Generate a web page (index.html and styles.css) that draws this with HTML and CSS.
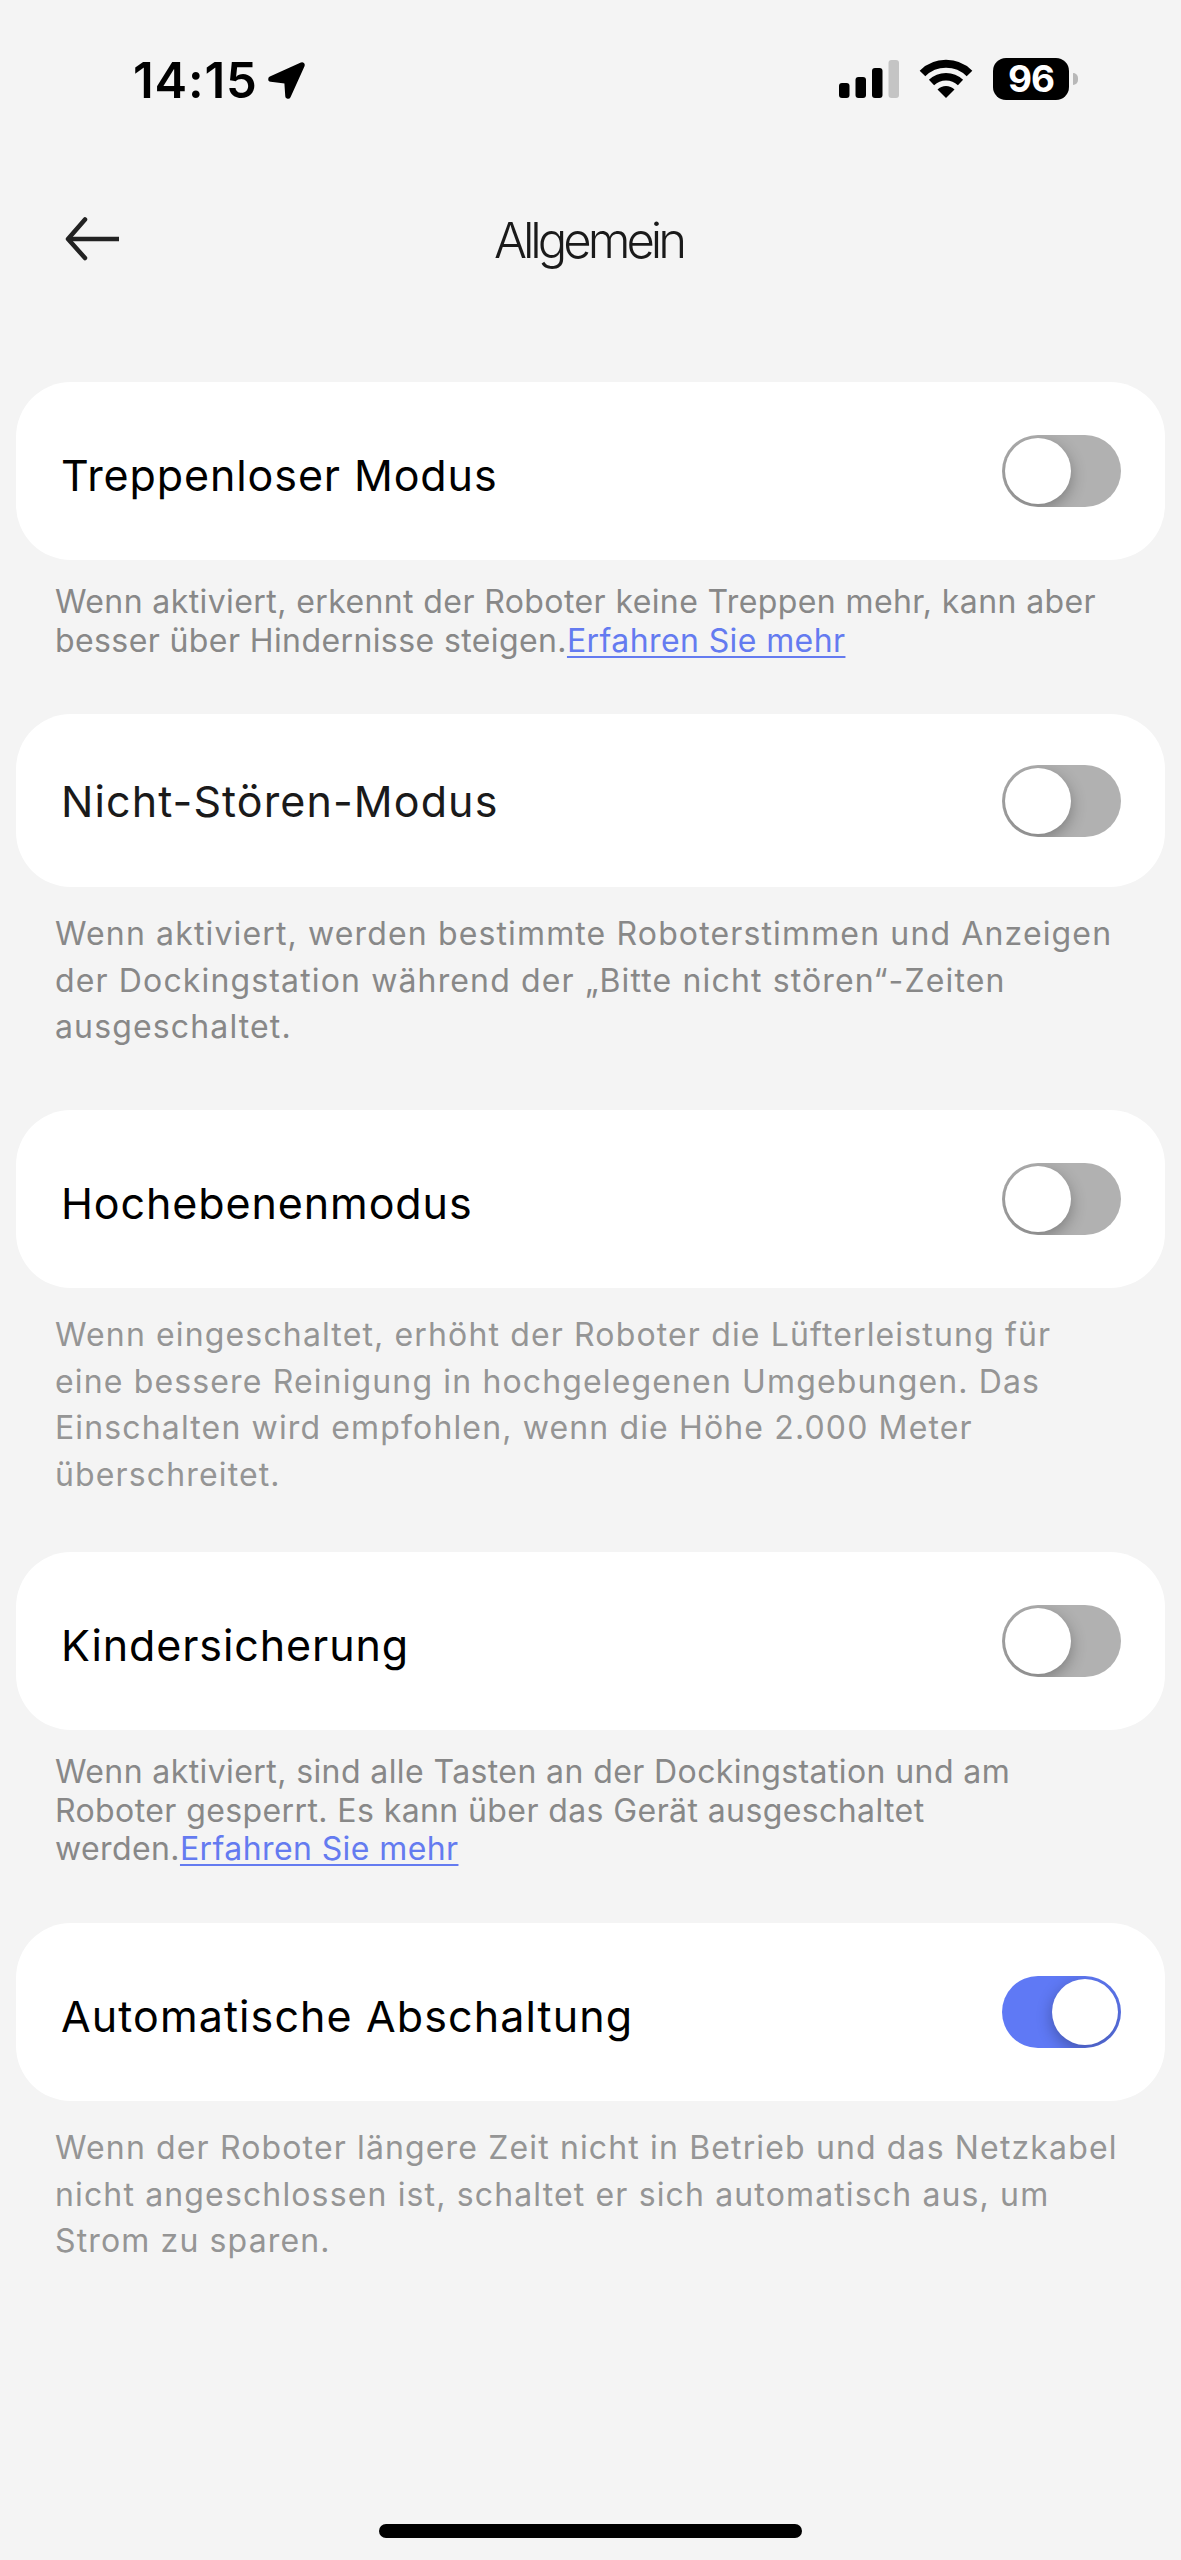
FILE: index.html
```html
<!DOCTYPE html>
<html lang="de">
<head>
    <meta charset="UTF-8">
    <meta name="viewport" content="width=device-width, initial-scale=1.0">
    <title>Allgemein</title>
    <link rel="stylesheet" href="styles.css">
</head>
<body>
    <div class="status-bar">
        <span class="time">14:15</span>
        <svg class="location" width="40" height="40" viewBox="0 0 40 40">
            <path d="M4 18 L35 4 L21 35 L20 20 Z" fill="#000" stroke="#000" stroke-width="5.500" stroke-linejoin="round"/>
        </svg>
        <svg class="signal" width="60" height="38" viewBox="0 0 60 38">
            <rect x="0" y="23" width="10.5" height="15" rx="3"/>
            <rect x="16.5" y="17" width="10.5" height="21" rx="3"/>
            <rect x="33" y="8" width="10.5" height="30" rx="3"/>
            <rect x="49.5" y="0" width="10.5" height="38" rx="3" fill="#c4c4c4"/>
        </svg>
        <svg class="wifi" width="54" height="40" viewBox="0 0 54 40">
            <path d="M3.500 14.500 A33.500 33.500 0 0 1 50.500 14.500" fill="none" stroke="#000" stroke-width="8"/>
            <path d="M12.500 23.500 A21 21 0 0 1 41.500 23.500" fill="none" stroke="#000" stroke-width="7.500"/>
            <path d="M27 39 L18.500 30.500 A12 12 0 0 1 35.500 30.500 Z"/>
        </svg>
        <div class="battery">96</div>
        <div class="battery-cap"></div>
    </div>

    <header class="header">
        <svg class="back" width="56" height="48" viewBox="0 0 56 48">
            <path d="M55 24 H4" fill="none" stroke="#222" stroke-width="4.500"/>
            <path d="M21 4.500 L4 24 L21 43" fill="none" stroke="#222" stroke-width="4.500" stroke-linecap="round" stroke-linejoin="round"/>
        </svg>
        <h1 class="title">Allgemein</h1>
    </header>

    <main>
        <section class="setting first">
            <div class="card">
                <span class="label">Treppenloser Modus</span>
                <div class="toggle"><div class="knob"></div></div>
            </div>
            <p class="tight">Wenn aktiviert, erkennt der Roboter keine Treppen mehr, kann aber<br>besser über Hindernisse steigen.<a class="more">Erfahren Sie mehr</a></p>
        </section>

        <section class="setting second">
            <div class="card short">
                <span class="label wide">Nicht-Stören-Modus</span>
                <div class="toggle"><div class="knob"></div></div>
            </div>
            <p class="loose">Wenn aktiviert, werden bestimmte Roboterstimmen und Anzeigen<br>der Dockingstation während der „Bitte nicht stören“-Zeiten<br>ausgeschaltet.</p>
        </section>

        <section class="setting third">
            <div class="card">
                <span class="label">Hochebenenmodus</span>
                <div class="toggle"><div class="knob"></div></div>
            </div>
            <p class="loose pale">Wenn eingeschaltet, erhöht der Roboter die Lüfterleistung für<br>eine bessere Reinigung in hochgelegenen Umgebungen. Das<br>Einschalten wird empfohlen, wenn die Höhe 2.000 Meter<br>überschreitet.</p>
        </section>

        <section class="setting fourth">
            <div class="card">
                <span class="label">Kindersicherung</span>
                <div class="toggle"><div class="knob"></div></div>
            </div>
            <p class="tight">Wenn aktiviert, sind alle Tasten an der Dockingstation und am<br>Roboter gesperrt. Es kann über das Gerät ausgeschaltet<br>werden.<a class="more">Erfahren Sie mehr</a></p>
        </section>

        <section class="setting">
            <div class="card">
                <span class="label wide">Automatische Abschaltung</span>
                <div class="toggle on"><div class="knob"></div></div>
            </div>
            <p class="loose pale">Wenn der Roboter längere Zeit nicht in Betrieb und das Netzkabel<br>nicht angeschlossen ist, schaltet er sich automatisch aus, um<br>Strom zu sparen.</p>
        </section>
    </main>

    <div class="home-bar"></div>
</body>
</html>
```
FILE: styles.css
```css
* { box-sizing: border-box; }
body { margin: 0; height: 2560px; display: flex; flex-direction: column; background: #f4f4f4; font-family: Inter, "Liberation Sans", sans-serif; color: #000; overflow: hidden; }

.status-bar { display: flex; align-items: flex-start; height: 140px; padding: 0 103px 0 133px; }
.time { margin-top: 50px; width: 126px; font-size: 49px; line-height: 62px; font-weight: 600; letter-spacing: 0.8px; white-space: nowrap; }
.location { margin: 61px 0 0 8px; }
.signal { margin: 60px 0 0 auto; }
.wifi { margin: 59px 0 0 20px; }
.battery { margin: 58px 0 0 20px; width: 76px; height: 42px; border-radius: 13px; background: #000; color: #fff; font-size: 37px; line-height: 42px; font-weight: 700; letter-spacing: -1px; text-align: center; }
.battery-cap { margin: 73px 0 0 4px; width: 5px; height: 12px; border-radius: 0 6px 6px 0; background: #b8b8b8; }

.header { display: grid; grid-template-columns: 120px 1fr 120px; height: 242px; padding: 0 64px; }
.back { margin-top: 75px; }
.title { margin: 67px 0 0; padding-right: 4px; font-size: 49px; line-height: 68px; font-weight: 270; letter-spacing: -4px; text-align: center; color: #1a1a1a; }

main { flex: 1; padding: 0 16px; }
.card { display: flex; align-items: center; justify-content: space-between; height: 178px; padding: 0 44px 0 45px; border-radius: 55px; background: #fff; }
.card.short { height: 173px; }
.label { font-size: 43px; line-height: 52px; letter-spacing: 0.9px; padding-top: 8px; white-space: nowrap; }
.label.wide { letter-spacing: 1.1px; }
.short .label { padding-top: 0; color: #1a1a1a; }

.toggle { width: 119px; height: 72px; padding: 3px; border-radius: 36px; display: flex; background: #b1b1b1; overflow: hidden; }
.knob { width: 66px; height: 66px; border-radius: 50%; background: #fff; box-shadow: 0 5px 16px rgba(0, 0, 0, 0.3); }
.toggle.on { background: #5f79f5; justify-content: flex-end; }

p { margin: 0; padding-left: 39px; font-size: 32px; color: #888; white-space: nowrap; }
.tight { padding-top: 23px; line-height: 38.500px; letter-spacing: 0.4px; }
.loose { padding-top: 24px; line-height: 46.700px; letter-spacing: 1.140px; }
.pale { color: #959595; }
.more { color: #647bf0; text-decoration: underline; text-decoration-thickness: 2px; text-underline-offset: 4px; }

.first { height: 332px; }
.second { height: 396px; }
.third { height: 442px; }
.fourth { height: 371px; }

.home-bar { width: 423px; height: 14px; margin: 0 auto 22px; border-radius: 7px; background: #000; }
```
